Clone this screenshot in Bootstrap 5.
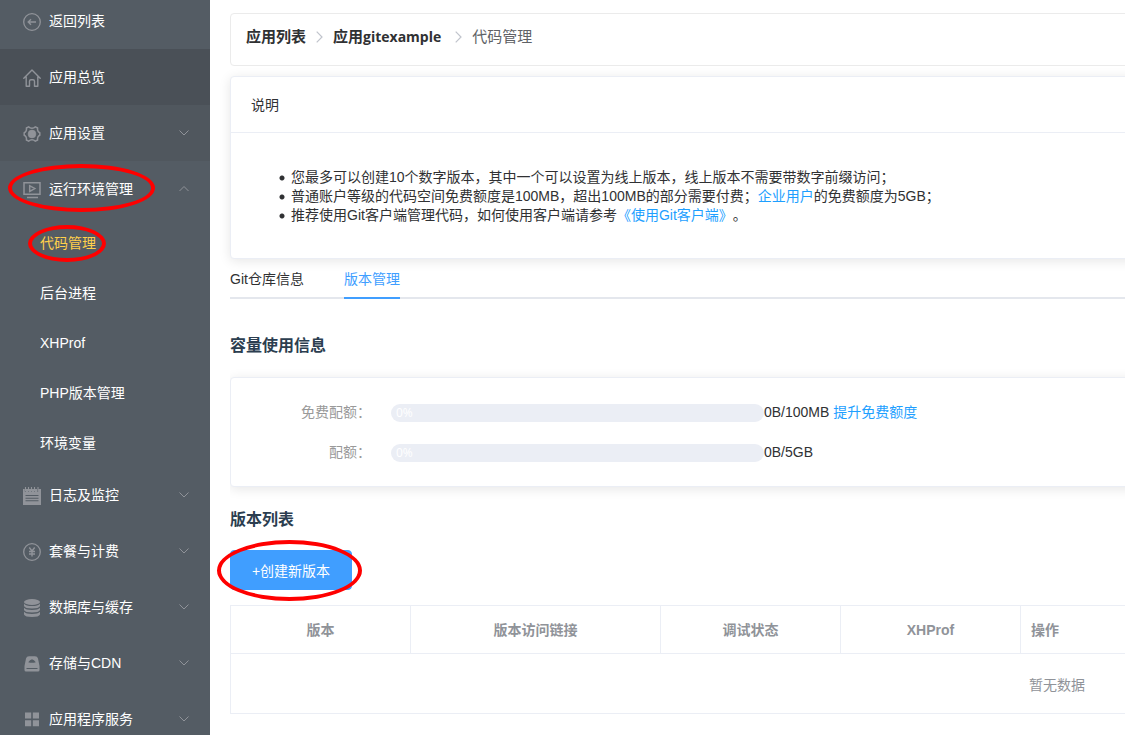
<!DOCTYPE html>
<html lang="zh-CN">
<head>
<meta charset="utf-8">
<meta name="viewport" content="width=device-width, initial-scale=1">
<title>代码管理</title>
<link rel="stylesheet" href="https://cdn.jsdelivr.net/npm/bootstrap@5.3.0/dist/css/bootstrap.min.css">
<style>
  body { font: 14px/20px "Liberation Sans", "Noto Sans CJK SC", sans-serif; color: #303133; text-spacing-trim: space-all; }
  a { color: #1e9fff; text-decoration: none; }

  .side-menu { width: 210px; background: #545c64; }
  .menu-item { height: 56px; padding: 0 20px 0 23px; gap: 8px; color: #fff; background: none; border: 0; text-align: left; position: relative; flex: none; width: 100%; }
  .menu-item svg { color: #909399; }
  .menu-back { height: 49px; padding-bottom: 7px; }
  .menu-current { background: #4a5057; }
  .menu-hover { background: #50575e; }
  .menu-icon { width: 18px; height: 18px; flex: none; margin-top: 2px; }
  .menu-arrow { width: 12px; height: 12px; margin-left: auto; }
  .sub-item { height: 50px; padding: 2px 0 0 40px; color: #fff; position: relative; }
  .sub-item.active { color: #ffd04b; }

  .page-body { min-width: 1674px; padding: 13px 0 20px 20px; }
  .path-box { height: 53px; padding: 13px 15px; border: 1px solid #ebebeb; border-radius: 4px; font-size: 15px; margin-bottom: 10px; }
  .path-box a { color: #303133; font-weight: 700; }
  .path-box .latin { font-family: "Open Sans", sans-serif; font-size: 14px; }
  .path-sep { width: 7px; height: 12px; margin: 0 10px; color: #c0c4cc; }
  .path-sep.wide { margin-left: 14px; }
  .path-here { color: #606266; }

  .panel { border: 1px solid #ebeef5; border-radius: 4px; box-shadow: 0 2px 12px rgba(0,0,0,.1); background: #fff; }
  .panel-title { padding: 18px 20px 17px; border-bottom: 1px solid #ebeef5; }
  .notes { padding: 35px 20px 33px 48px; margin: 0; line-height: 19px; list-style: none; }
  .notes li { padding-left: 12px; background: radial-gradient(circle at 3px 10px, #303133 2px, transparent 3px); }

  .tab-bar { height: 40px; gap: 40px; border-bottom: 2px solid #e4e7ed; }
  .tab-bar button { height: 40px; padding: 2px 0 0; border: 0; border-bottom: 2px solid transparent; background: none; color: #303133; position: relative; }
  .tab-bar button.active { color: #409eff; border-color: #409eff; }

  .pane { overflow: hidden; padding-top: 37px; }
  .pane h2 { font-size: 16px; line-height: 20px; font-weight: 700; color: #2c3e50; margin: 0; }
  .quota-panel { margin: 21px 0 23px; padding: 14px 0; }
  .quota-row { height: 40px; }
  .quota-label { width: 140px; margin-right: 20px; text-align: right; color: #999; }
  .quota-bar { width: 373px; height: 18px; margin-top: 2px; border-radius: 9px; background: #ebeef5; color: #fff; font: 12px/18px "Open Sans", sans-serif; padding-left: 5px; }
  .btn-create { height: 40px; width: 122px; margin: 20px 0 15px; padding: 2px 0 0; font-size: 14px; border-radius: 4px; --bs-btn-bg: #409eff; --bs-btn-border-color: #409eff; position: relative; }

  .version-table { table-layout: fixed; border-color: #ebeef5; margin: 0; }
  .version-table th, .version-table td { color: #909399; padding: 0 10px; vertical-align: middle; }
  .version-table th { height: 48px; }
  .version-table td { height: 60px; padding-top: 2px; }
  .w-std { width: 180px; }
  .w-link { width: 250px; }

  /* hand-drawn style rings laid over the highlighted controls */
  .ring { position: absolute; border: 4px solid #f00; border-radius: 50%; pointer-events: none; z-index: 2; }
  .ring-menu { left: 8px; top: 3px; width: 147px; height: 48px; }
  .ring-sub { left: 28px; top: 8px; width: 78px; height: 37px; }
  .ring-btn { left: -14px; top: -11px; width: 145px; height: 61px; }
</style>
</head>
<body>
<svg class="d-none">
  <symbol id="down" viewBox="0 0 12 12"><path d="M1.500 3.500 6 8l4.500-4.500" fill="none" stroke="currentColor"/></symbol>
  <symbol id="up" viewBox="0 0 12 12"><path d="M1.500 8 6 3.500 10.500 8" fill="none" stroke="currentColor"/></symbol>
  <symbol id="sep" viewBox="0 0 7 12"><path d="M.7 .7 6 6 .7 11.300" fill="none" stroke="currentColor" stroke-width="1.200"/></symbol>
</svg>
<div class="d-flex vh-100 overflow-hidden">
  <nav class="side-menu d-flex flex-column flex-shrink-0 overflow-hidden" aria-label="主菜单">
    <a class="menu-item menu-back d-flex align-items-center" href="#">
      <svg class="menu-icon" viewBox="0 0 18 18" fill="none" stroke="currentColor" stroke-width="1.300"><circle cx="9" cy="9" r="8.300"/><path d="M13 9H5.500M8 6.200 5.200 9 8 11.800" stroke-width="1.400"/></svg>返回列表</a>
    <a class="menu-item menu-current d-flex align-items-center" href="#">
      <svg class="menu-icon" viewBox="0 0 18 18" fill="none" stroke="currentColor" stroke-width="1.400" stroke-linejoin="round" stroke-linecap="round"><path d="M.8 9.200 9 1l8.200 8.200M3.200 8v9.200H6.500v-5q0-1.500 1.500-1.500h2q1.500 0 1.500 1.500v5h3.300V8"/></svg>应用总览</a>
    <button class="menu-item menu-hover d-flex align-items-center" type="button">
      <svg class="menu-icon" viewBox="0 0 18 18" fill="none" stroke="currentColor" stroke-width="1.500" stroke-linejoin="round"><path d="M5.600 1.800Q7 3.200 9 3.200t3.400-1.400L14.600 3Q14.300 5 15 6.200T16.800 7.800V10.200Q15.700 10.600 15 11.800T14.600 15L12.400 16.200Q11 14.800 9 14.800T5.600 16.200L3.400 15Q3.700 13 3 11.800T1.200 10.200V7.800Q2.300 7.400 3 6.200T3.400 3Z"/><circle cx="9" cy="9" r="3.900" fill="currentColor" stroke-width=".6"/></svg>应用设置
      <svg class="menu-arrow"><use href="#down"/></svg></button>
    <button class="menu-item d-flex align-items-center" type="button" aria-expanded="true">
      <svg class="menu-icon" viewBox="0 0 18 18" fill="none" stroke="currentColor" stroke-width="1.500"><path d="M1 1.800h16v11.400H1zM4 16.500h11M6.700 4.700v5.800L11.800 7.600z"/></svg>运行环境管理
      <svg class="menu-arrow"><use href="#up"/></svg>
      <span class="ring ring-menu"></span></button>
    <div class="d-flex flex-column flex-shrink-0">
      <a class="sub-item active d-flex align-items-center" href="#">代码管理<span class="ring ring-sub"></span></a>
      <a class="sub-item d-flex align-items-center" href="#">后台进程</a>
      <a class="sub-item d-flex align-items-center" href="#">XHProf</a>
      <a class="sub-item d-flex align-items-center" href="#">PHP版本管理</a>
      <a class="sub-item d-flex align-items-center" href="#">环境变量</a>
    </div>
    <button class="menu-item d-flex align-items-center" type="button">
      <svg class="menu-icon" viewBox="0 0 18 18"><path fill="currentColor" fill-rule="evenodd" d="M0 2h1.800v2.500h1.200V2h2v2.500h1V2h2v2.500h1V2h2v2.500h1V2h2v2.500h1.200V2H18v16H0zM2.500 8v1h13V8zM2.500 10.700v1h13v-1zM2.500 13.300v1h13v-1z"/><path d="M2.500 0v4M5.500 0v4M8.500 0v4M11.500 0v4M15 0v4" stroke="currentColor" stroke-width="1.100"/></svg>日志及监控
      <svg class="menu-arrow"><use href="#down"/></svg></button>
    <button class="menu-item d-flex align-items-center" type="button">
      <svg class="menu-icon" viewBox="0 0 18 18" fill="none" stroke="currentColor" stroke-width="1.300"><circle cx="9" cy="9" r="8.300"/><path d="M6.300 4.500 9 8l2.700-3.500M9 8v5.500M6 8.500h6M6 11h6" stroke-width="1.400"/></svg>套餐与计费
      <svg class="menu-arrow"><use href="#down"/></svg></button>
    <button class="menu-item d-flex align-items-center" type="button">
      <svg class="menu-icon" viewBox="0 0 18 18" fill="currentColor"><ellipse cx="9" cy="3" rx="8" ry="3"/><path d="M1 4.700q2 2.300 8 2.300t8-2.300v2.300q-1 2.500-8 2.500T1 7zM1 8.800q2 2.200 8 2.200t8-2.200V11q-1 2.500-8 2.500T1 11zM1 12.800Q3 15 9 15t8-2.200V15.500Q16 18 9 18t-8-2.500z"/></svg>数据库与缓存
      <svg class="menu-arrow"><use href="#down"/></svg></button>
    <button class="menu-item d-flex align-items-center" type="button">
      <svg class="menu-icon" viewBox="0 0 18 18"><path fill="currentColor" fill-rule="evenodd" d="M6 1.200h6q2.400 0 3 2.300l1.500 7.500v4q0 1.500-1.500 1.500H3q-1.500 0-1.500-1.500V11L3 3.500q.6-2.300 3-2.300zM9 4.200Q7 4.500 5.200 7.200q2 .6 3.800.6t3.800-.6Q11 4.500 9 4.200zM3.500 13v1h11v-1z"/></svg>存储与CDN
      <svg class="menu-arrow"><use href="#down"/></svg></button>
    <button class="menu-item d-flex align-items-center" type="button">
      <svg class="menu-icon" viewBox="0 0 18 18"><path fill="currentColor" d="M2 1.500h6.200v6H2zM9.800 1.500H16v6H9.800zM2 9.200h6.200v6H2zM9.800 9.200H16v6H9.800z"/></svg>应用程序服务
      <svg class="menu-arrow"><use href="#down"/></svg></button>
  </nav>

  <main class="flex-grow-1 overflow-hidden">
    <div class="page-body">
      <nav class="path-box d-flex align-items-start" aria-label="breadcrumb">
        <div class="d-flex align-items-center">
          <a href="#">应用列表</a>
          <svg class="path-sep"><use href="#sep"/></svg>
          <a href="#">应用<span class="latin">gitexample</span></a>
          <svg class="path-sep wide"><use href="#sep"/></svg>
          <span class="path-here">代码管理</span>
        </div>
      </nav>

      <section class="panel">
        <div class="panel-title">说明</div>
        <ul class="notes">
          <li>您最多可以创建10个数字版本，其中一个可以设置为线上版本，线上版本不需要带数字前缀访问；</li>
          <li>普通账户等级的代码空间免费额度是100MB，超出100MB的部分需要付费；<a href="#">企业用户</a>的免费额度为5GB；</li>
          <li>推荐使用Git客户端管理代码，如何使用客户端请参考<a href="#">《使用Git客户端》</a>。</li>
        </ul>
      </section>

      <div class="tab-bar d-flex" role="tablist">
        <button type="button" role="tab">Git仓库信息</button>
        <button type="button" role="tab" class="active" aria-selected="true">版本管理</button>
      </div>

      <section class="pane">
        <h2>容量使用信息</h2>
        <div class="panel quota-panel">
          <div class="quota-row d-flex align-items-center">
            <div class="quota-label">免费配额：</div>
            <div class="quota-bar" role="progressbar" aria-label="免费配额" aria-valuenow="0">0%</div>
            <div>0B/100MB <a href="#">提升免费额度</a></div>
          </div>
          <div class="quota-row d-flex align-items-center">
            <div class="quota-label">配额：</div>
            <div class="quota-bar" role="progressbar" aria-label="配额" aria-valuenow="0">0%</div>
            <div>0B/5GB</div>
          </div>
        </div>
        <h2>版本列表</h2>
      </section>
      <button class="btn btn-primary btn-create d-block" type="button">+创建新版本<span class="ring ring-btn"></span></button>
      <table class="table table-bordered version-table">
        <thead>
          <tr class="text-center">
            <th class="w-std">版本</th>
            <th class="w-link">版本访问链接</th>
            <th class="w-std">调试状态</th>
            <th class="w-std">XHProf</th>
            <th class="text-start">操作</th>
          </tr>
        </thead>
        <tbody>
          <tr><td colspan="5" class="text-center">暂无数据</td></tr>
        </tbody>
      </table>
    </div>
  </main>
</div>
<script src="https://cdn.jsdelivr.net/npm/bootstrap@5.3.0/dist/js/bootstrap.bundle.min.js"></script>
</body>
</html>
